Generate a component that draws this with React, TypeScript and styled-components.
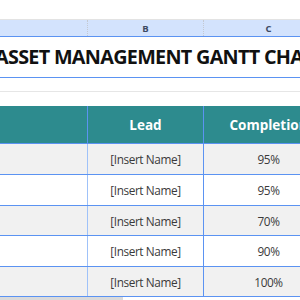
import React from 'react';
import styled, { createGlobalStyle } from 'styled-components';

const GRID_BLUE = '#9fc2f9';
const LINE_BLUE = '#5b93f2';
const TEAL = '#2d8b8e';

const rows = [
  { lead: '[Insert Name]', completion: '95%', height: 31 },
  { lead: '[Insert Name]', completion: '95%', height: 31 },
  { lead: '[Insert Name]', completion: '70%', height: 30 },
  { lead: '[Insert Name]', completion: '90%', height: 31 },
  { lead: '[Insert Name]', completion: '100%', height: 30 },
];

const GlobalStyle = createGlobalStyle`
  html, body {
    margin: 0;
    padding: 0;
    background: #ffffff;
  }
  body {
    font-family: 'Open Sans', 'Liberation Sans', sans-serif;
  }
`;

function App() {
  return (
    <Page>
      <GlobalStyle />
      <Toolbar />
      <ColumnHeaders>
        <ColLetter />
        <ColLetter>B</ColLetter>
        <ColLetter>C</ColLetter>
      </ColumnHeaders>
      <TitleRow>ASSET MANAGEMENT GANTT CHART</TitleRow>
      <SpacerRow $line />
      <SpacerRow />
      <HeaderRow>
        <HeadCell />
        <HeadCell>Lead</HeadCell>
        <HeadCell>Completion</HeadCell>
      </HeaderRow>
      {rows.map((row, i) => (
        <DataRow key={i} $shaded={i % 2 === 0} $h={row.height}>
          <Cell $light />
          <Cell>{row.lead}</Cell>
          <Cell>{row.completion}</Cell>
        </DataRow>
      ))}
      <Scrollbar />
    </Page>
  );
}

export default App;

const Page = styled.div`
  width: 300px;
  height: 300px;
  overflow: hidden;
  display: flex;
  flex-direction: column;
  background: #ffffff;
`;

const Toolbar = styled.div`
  height: 20px;
  flex-shrink: 0;
  border-bottom: 1px solid #e3e3e3;
  box-sizing: border-box;
`;

const Grid = styled.div`
  display: grid;
  grid-template-columns: 88px 116px 130px;
  width: 334px;
  flex-shrink: 0;
  box-sizing: border-box;
`;

const ColumnHeaders = styled(Grid)`
  height: 17px;
  background: #d3e3fd;
  border-bottom: 1px solid ${LINE_BLUE};
`;

const ColLetter = styled.div`
  display: flex;
  align-items: center;
  justify-content: center;
  font-size: 9.5px;
  font-weight: 700;
  color: #3c4a63;
  border-right: 1px dotted #c4c9d2;
`;

const TitleRow = styled.div`
  height: 41px;
  line-height: 40px;
  flex-shrink: 0;
  box-sizing: border-box;
  border-bottom: 1px solid ${LINE_BLUE};
  overflow: hidden;
  white-space: nowrap;
  text-indent: -5px;
  font-size: 19.8px;
  font-weight: 700;
  color: #111111;
  letter-spacing: -0.7px;
`;

const SpacerRow = styled.div<{ $line?: boolean }>`
  height: 14px;
  flex-shrink: 0;
  box-sizing: border-box;
  border-bottom: ${(p) => (p.$line ? '1px solid #e6e6e6' : 'none')};
`;

const HeaderRow = styled(Grid)`
  height: 38px;
  background: ${TEAL};
  border-bottom: 1px solid ${LINE_BLUE};
`;

const HeadCell = styled.div`
  display: flex;
  align-items: center;
  justify-content: center;
  font-size: 13.5px;
  font-weight: 700;
  color: #ffffff;
  border-right: 1px solid ${LINE_BLUE};
`;

const DataRow = styled(Grid)<{ $shaded: boolean; $h: number }>`
  height: ${(p) => p.$h}px;
  background: ${(p) => (p.$shaded ? '#f1f1f1' : '#ffffff')};
  border-bottom: 1px solid ${LINE_BLUE};
`;

const Cell = styled.div<{ $light?: boolean }>`
  display: flex;
  align-items: center;
  justify-content: center;
  font-size: 11.8px;
  letter-spacing: -0.4px;
  color: #3a3a3a;
  border-right: 1px solid ${(p) => (p.$light ? GRID_BLUE : LINE_BLUE)};
`;

const Scrollbar = styled.div`
  width: 123px;
  height: 3px;
  background: #dadada;
  flex-shrink: 0;
`;
